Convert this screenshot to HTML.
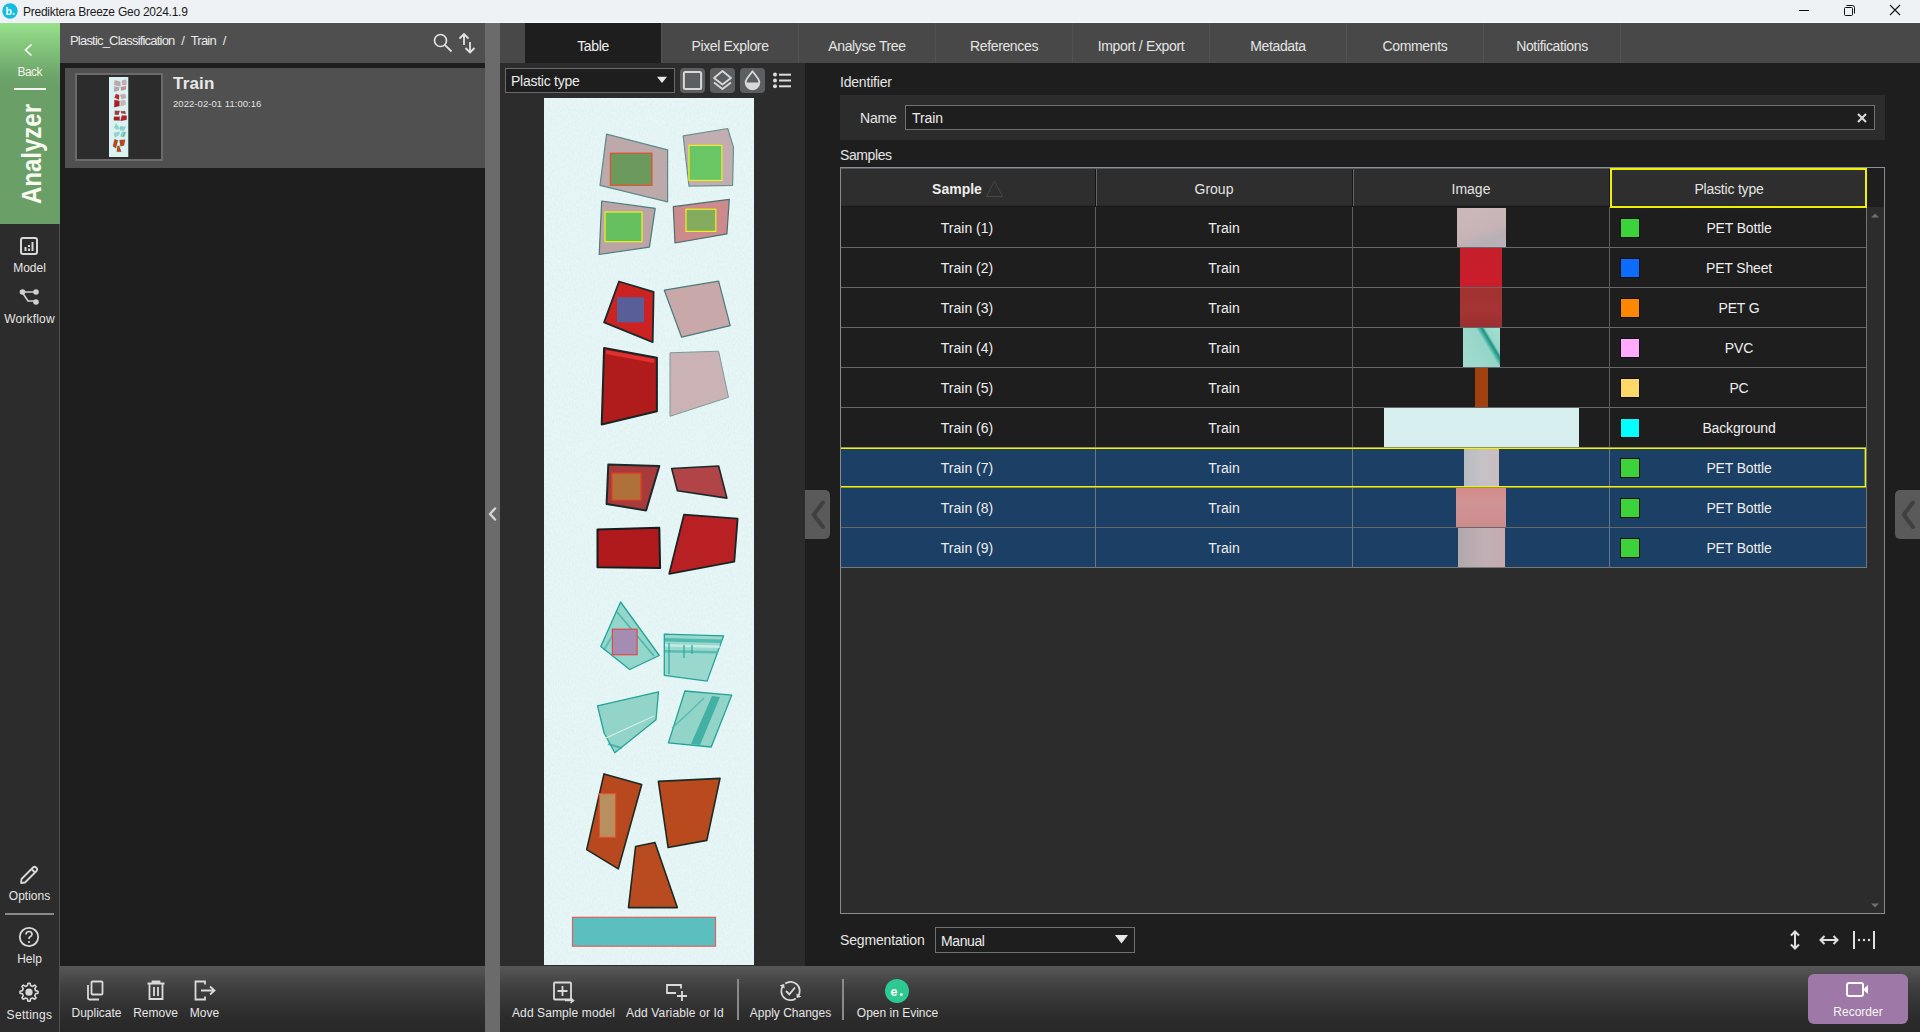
<!DOCTYPE html>
<html><head><meta charset="utf-8">
<style>
*{box-sizing:border-box;margin:0;padding:0}
html,body{width:1920px;height:1032px;overflow:hidden;background:#1e1e1e;font-family:"Liberation Sans",sans-serif;color:#e6e6e6}
.a{position:absolute;display:block}
.t{position:absolute;white-space:nowrap;line-height:1}
</style></head><body>

<div class="a" style="left:0px;top:0px;width:1920px;height:22px;background:#eef2f5;"></div>
<div class="a" style="left:0px;top:22px;width:1920px;height:1px;background:#f8fafc;"></div>
<svg class="a" style="left:2px;top:3px;" width="16" height="16" viewBox="0 0 16 16"><circle cx="8" cy="8" r="7.7" fill="#14bde0"/><text x="3.6" y="12" font-family="Liberation Sans" font-weight="700" font-size="10.5" fill="#fff">b</text><circle cx="11.6" cy="11" r="1" fill="#fff"/></svg>
<div class="t" style="left:23px;top:5.84px;font-size:12px;color:#1a1a1a;font-weight:400;letter-spacing:-0.25px;">Prediktera Breeze Geo 2024.1.9</div>
<div class="a" style="left:1799px;top:10px;width:10px;height:1px;background:#111;"></div>
<svg class="a" style="left:1843px;top:4px;" width="13" height="13" viewBox="0 0 13 13"><rect x="1.5" y="3.5" width="8" height="8" rx="1" fill="none" stroke="#111" stroke-width="1"/><path d="M3.5 1.5 H9.5 Q11.5 1.5 11.5 3.5 V9.5" fill="none" stroke="#111" stroke-width="1"/></svg>
<svg class="a" style="left:1889px;top:4px;" width="12" height="12" viewBox="0 0 12 12"><path d="M1 1 L11 11 M11 1 L1 11" stroke="#111" stroke-width="1.1"/></svg>
<div class="a" style="left:0px;top:23px;width:60px;height:1009px;background:#2c2c2c;"></div>
<div class="a" style="left:59px;top:23px;width:1px;height:1009px;background:#505050;"></div>
<div class="a" style="left:0px;top:23px;width:60px;height:201px;background:linear-gradient(#98e28c 0px,#86c97e 20px,#6ea56b 52px,#6aa068 66px,#6aa068 201px);"></div>
<svg class="a" style="left:23px;top:43px;" width="12" height="14" viewBox="0 0 12 14"><path d="M8.5 1.5 L2.5 7 L8.5 12.5" fill="none" stroke="#fff" stroke-width="1.6"/></svg>
<div class="t" style="left:17.5px;top:65.84px;font-size:12px;color:#f4f4e8;font-weight:400;letter-spacing:-0.6px;">Back</div>
<div class="a" style="left:14px;top:88px;width:32px;height:2px;background:#f2f2f2;"></div>
<div class="t" style="left:31.5px;top:154.3px;font-size:27px;font-weight:700;color:#fafaf0;transform:translate(-50%,-50%) rotate(-90deg) scaleX(0.89);transform-origin:50% 50%;line-height:1">Analyzer</div>
<svg class="a" style="left:19px;top:236px;" width="20" height="20" viewBox="0 0 20 20"><rect x="2" y="2" width="16" height="16" rx="2" fill="none" stroke="#d8d8d8" stroke-width="2"/><rect x="5.5" y="11" width="2" height="4" fill="#d8d8d8"/><rect x="9" y="9" width="2" height="2" fill="#d8d8d8"/><rect x="9" y="12.5" width="2" height="2.5" fill="#d8d8d8"/><rect x="12.5" y="6" width="2" height="9" fill="#d8d8d8"/></svg>
<div class="t" style="left:-270.5px;width:600px;text-align:center;top:261.84px;font-size:12px;color:#e6e6e6;font-weight:400;letter-spacing:0px;">Model</div>
<svg class="a" style="left:18px;top:286px;" width="24" height="20" viewBox="0 0 24 20"><path d="M4 6 H18 M4 6 L10 15 H18" fill="none" stroke="#d0d0d0" stroke-width="1.6"/><circle cx="4.5" cy="6" r="2.8" fill="#d0d0d0"/><circle cx="18" cy="6" r="2.8" fill="#d0d0d0"/><circle cx="18" cy="16" r="2.8" fill="#d0d0d0"/></svg>
<div class="t" style="left:-270.5px;width:600px;text-align:center;top:312.84px;font-size:12px;color:#e6e6e6;font-weight:400;letter-spacing:0.2px;">Workflow</div>
<svg class="a" style="left:18px;top:864px;" width="22" height="22" viewBox="0 0 22 22"><path d="M3 19 L3.5 15 L15 3.5 Q16.5 2 18 3.5 L18.5 4 Q20 5.5 18.5 7 L7 18.5 Z" fill="none" stroke="#d8d8d8" stroke-width="1.8" stroke-linejoin="round"/><path d="M13.5 5 L17 8.5" stroke="#d8d8d8" stroke-width="1.8"/></svg>
<div class="t" style="left:-270.5px;width:600px;text-align:center;top:889.84px;font-size:12px;color:#e6e6e6;font-weight:400;letter-spacing:0px;">Options</div>
<div class="a" style="left:5px;top:913px;width:49px;height:2px;background:#8a8a8a;"></div>
<svg class="a" style="left:18px;top:926px;" width="22" height="22" viewBox="0 0 22 22"><circle cx="11" cy="11" r="9.2" fill="none" stroke="#d8d8d8" stroke-width="1.8"/><path d="M8 8.5 Q8 5.5 11 5.5 Q14 5.5 14 8.3 Q14 10 11.8 11 Q11 11.5 11 13" fill="none" stroke="#d8d8d8" stroke-width="1.7"/><circle cx="11" cy="16" r="1.1" fill="#d8d8d8"/></svg>
<div class="t" style="left:-270.5px;width:600px;text-align:center;top:952.84px;font-size:12px;color:#e6e6e6;font-weight:400;letter-spacing:0px;">Help</div>
<svg class="a" style="left:18px;top:982px;" width="22" height="22" viewBox="0 0 22 22"><path d="M10 1.2 L12 1.2 L12.6 3.6 L14.6 4.4 L16.7 3.1 L18.1 4.5 L16.8 6.6 L17.6 8.6 L20 9.2 L20 11.2 L17.6 11.8 L16.8 13.8 L18.1 15.9 L16.7 17.3 L14.6 16 L12.6 16.8 L12 19.2 L10 19.2 L9.4 16.8 L7.4 16 L5.3 17.3 L3.9 15.9 L5.2 13.8 L4.4 11.8 L2 11.2 L2 9.2 L4.4 8.6 L5.2 6.6 L3.9 4.5 L5.3 3.1 L7.4 4.4 L9.4 3.6 Z" fill="none" stroke="#d8d8d8" stroke-width="1.6" stroke-linejoin="round"/><circle cx="11" cy="10.2" r="3.6" fill="#d8d8d8"/></svg>
<div class="t" style="left:-270.5px;width:600px;text-align:center;top:1008.84px;font-size:12px;color:#e6e6e6;font-weight:400;letter-spacing:0.3px;">Settings</div>
<div class="a" style="left:60px;top:23px;width:425px;height:40px;background:#4f4f4f;"></div>
<div class="a" style="left:60px;top:63px;width:425px;height:903px;background:#1e1e1e;"></div>
<div class="t" style="left:70px;top:34.00px;font-size:13px;color:#e8e8e8;font-weight:400;letter-spacing:-0.8px;word-spacing:4px">Plastic_Classification / Train /</div>
<svg class="a" style="left:432px;top:32px;" width="22" height="22" viewBox="0 0 22 22"><circle cx="8.5" cy="8.5" r="6" fill="none" stroke="#e2e2e2" stroke-width="1.7"/><path d="M12.8 12.8 L19.5 19.5" stroke="#e2e2e2" stroke-width="1.8"/></svg>
<svg class="a" style="left:456px;top:31px;" width="24" height="24" viewBox="0 0 24 24"><path d="M8 14 V3 M3.5 7.5 L8 3 L12.5 7.5" fill="none" stroke="#e2e2e2" stroke-width="1.8"/><path d="M14 11 V21.5 M9.5 17 L14 21.5 L18.5 17" fill="none" stroke="#e2e2e2" stroke-width="1.8"/></svg>
<div class="a" style="left:65px;top:68px;width:420px;height:100px;background:#505050;"></div>
<div class="a" style="left:75px;top:73px;width:88px;height:88px;background:#2c2c2c;border:2px solid #6a6a6a"></div>
<div class="t" style="left:173px;top:74.61px;font-size:17px;color:#e8e8e8;font-weight:700;letter-spacing:0.2px;">Train</div>
<div class="t" style="left:173px;top:98.96px;font-size:9.5px;color:#e0e0e0;font-weight:400;letter-spacing:0.05px;">2022-02-01 11:00:16</div>
<div class="a" style="left:60px;top:966px;width:425px;height:66px;background:linear-gradient(#575757 0px,#3e3e3e 22px,#2c2c2c 50px,#282828 66px);"></div>
<svg class="a" style="left:84px;top:979px;" width="24" height="24" viewBox="0 0 24 24"><rect x="7.5" y="2.5" width="11" height="13" rx="1" fill="none" stroke="#dadada" stroke-width="1.8"/><path d="M4 6 V19 Q4 20.5 5.5 20.5 H15" fill="none" stroke="#dadada" stroke-width="1.8"/></svg>
<div class="t" style="left:-203.5px;width:600px;text-align:center;top:1006.84px;font-size:12px;color:#e6e6e6;font-weight:400;letter-spacing:0px;">Duplicate</div>
<svg class="a" style="left:144px;top:979px;" width="24" height="24" viewBox="0 0 24 24"><path d="M3.5 4.5 H20.5 M8.5 4.5 V2.5 H15.5 V4.5" fill="none" stroke="#dadada" stroke-width="1.8"/><path d="M5.5 5 V20 H18.5 V5" fill="none" stroke="#dadada" stroke-width="1.8"/><path d="M10 8 V17 M14 8 V17" stroke="#dadada" stroke-width="1.8"/></svg>
<div class="t" style="left:-144.5px;width:600px;text-align:center;top:1006.84px;font-size:12px;color:#e6e6e6;font-weight:400;letter-spacing:0px;">Remove</div>
<svg class="a" style="left:192px;top:979px;" width="26" height="24" viewBox="0 0 26 24"><path d="M13 5.5 V2.5 H3.5 V20.5 H13 V17.5" fill="none" stroke="#dadada" stroke-width="1.8"/><path d="M9 11.5 H22 M18 7.5 L22.5 11.5 L18 15.5" fill="none" stroke="#dadada" stroke-width="1.8"/></svg>
<div class="t" style="left:-95.5px;width:600px;text-align:center;top:1006.84px;font-size:12px;color:#e6e6e6;font-weight:400;letter-spacing:0px;">Move</div>
<div class="a" style="left:485px;top:23px;width:15px;height:1009px;background:#6b6b6b;"></div>
<svg class="a" style="left:487px;top:506px;" width="11" height="16" viewBox="0 0 11 16"><path d="M8 2.5 L3 8 L8 13.5" fill="none" stroke="#d6d6d6" stroke-width="2.4" stroke-linecap="round" stroke-linejoin="round"/></svg>
<div class="a" style="left:500px;top:23px;width:1420px;height:40px;background:#484848;"></div>
<div class="a" style="left:525px;top:23px;width:136px;height:40px;background:#1e1e1e;"></div>
<div class="t" style="left:293px;width:600px;text-align:center;top:39.15px;font-size:14px;color:#f0f0f0;font-weight:400;letter-spacing:-0.35px;">Table</div>
<div class="a" style="left:661px;top:23px;width:1px;height:40px;background:#525252;"></div>
<div class="t" style="left:430px;width:600px;text-align:center;top:39.15px;font-size:14px;color:#e4e4e4;font-weight:400;letter-spacing:-0.35px;">Pixel Explore</div>
<div class="a" style="left:798px;top:23px;width:1px;height:40px;background:#525252;"></div>
<div class="t" style="left:567px;width:600px;text-align:center;top:39.15px;font-size:14px;color:#e4e4e4;font-weight:400;letter-spacing:-0.35px;">Analyse Tree</div>
<div class="a" style="left:935px;top:23px;width:1px;height:40px;background:#525252;"></div>
<div class="t" style="left:704px;width:600px;text-align:center;top:39.15px;font-size:14px;color:#e4e4e4;font-weight:400;letter-spacing:-0.35px;">References</div>
<div class="a" style="left:1072px;top:23px;width:1px;height:40px;background:#525252;"></div>
<div class="t" style="left:841px;width:600px;text-align:center;top:39.15px;font-size:14px;color:#e4e4e4;font-weight:400;letter-spacing:-0.35px;">Import / Export</div>
<div class="a" style="left:1209px;top:23px;width:1px;height:40px;background:#525252;"></div>
<div class="t" style="left:978px;width:600px;text-align:center;top:39.15px;font-size:14px;color:#e4e4e4;font-weight:400;letter-spacing:-0.35px;">Metadata</div>
<div class="a" style="left:1346px;top:23px;width:1px;height:40px;background:#525252;"></div>
<div class="t" style="left:1115px;width:600px;text-align:center;top:39.15px;font-size:14px;color:#e4e4e4;font-weight:400;letter-spacing:-0.35px;">Comments</div>
<div class="a" style="left:1483px;top:23px;width:1px;height:40px;background:#525252;"></div>
<div class="t" style="left:1252px;width:600px;text-align:center;top:39.15px;font-size:14px;color:#e4e4e4;font-weight:400;letter-spacing:-0.35px;">Notifications</div>
<div class="a" style="left:1620px;top:23px;width:1px;height:40px;background:#525252;"></div>
<div class="a" style="left:500px;top:63px;width:305px;height:903px;background:#2c2c2c;"></div>
<svg class="a" style="left:544px;top:98px;" width="210" height="867" viewBox="0 0 210 867"><defs><filter id="nf" x="0" y="0" width="100%" height="100%"><feTurbulence type="fractalNoise" baseFrequency="0.7 0.35" numOctaves="2" seed="3"/><feColorMatrix values="0 0 0 0 1  0 0 0 0 1  0 0 0 0 1  0 0 0 -1.2 1.1"/></filter><pattern id="noise" width="210" height="867" patternUnits="userSpaceOnUse"><rect width="210" height="867" filter="url(#nf)"/></pattern></defs><rect x="0" y="0" width="210" height="867" fill="#dcf1f1"/><rect x="0" y="0" width="210" height="867" fill="url(#noise)" opacity="0.5"/><polygon points="62.6,36.2 123.6,51.9 123.6,103.8 56.0,87.3" fill="#bda9aa" stroke="#5c8a8a" stroke-width="1.2" opacity="1" stroke-linejoin="round"/><rect x="66.4" y="55.2" width="41.5" height="32.1" fill="#6c9a5c" stroke="#e05030" stroke-width="1.2" fill-opacity="1"/><polygon points="139.2,37.9 183.7,30.5 189.5,49.4 188.6,87.3 145.0,88.1" fill="#c2aeb0" stroke="#6a9090" stroke-width="1.2" opacity="1" stroke-linejoin="round"/><rect x="145.0" y="47.4" width="32.9" height="35.0" fill="#68c664" stroke="#f0f020" stroke-width="1.2" fill-opacity="1"/><polygon points="57.7,103.0 111.2,110.4 105.4,149.1 55.2,156.5" fill="#bba4a6" stroke="#4a7a7a" stroke-width="1.2" opacity="1" stroke-linejoin="round"/><rect x="61.0" y="114.0" width="37.0" height="29.7" fill="#66c060" stroke="#f0f020" stroke-width="1.2" fill-opacity="1"/><polygon points="129.3,108.7 185.3,101.3 182.9,135.9 131.0,145.0" fill="#cc8a8c" stroke="#4a7070" stroke-width="1.2" opacity="1" stroke-linejoin="round"/><rect x="142.0" y="111.2" width="29.8" height="22.2" fill="#84ac5e" stroke="#f0f020" stroke-width="1.2" fill-opacity="1"/><polygon points="75.0,183.5 109.6,193.9 108.7,244.1 60.1,224.4" fill="#cc2222" stroke="#1c2a2a" stroke-width="1.8" opacity="1" stroke-linejoin="round"/><rect x="73.0" y="199.2" width="27.0" height="25.2" fill="#5a5e98" stroke="none" stroke-width="0" fill-opacity="1"/><polygon points="120.3,192.2 174.6,183.2 186.2,227.7 137.6,239.2" fill="#c9a8aa" stroke="#4a7a7a" stroke-width="1.2" opacity="1" stroke-linejoin="round"/><polygon points="60.1,249.9 112.9,259.8 112.9,313.3 57.7,326.5" fill="#b01c1c" stroke="#1a2424" stroke-width="2" opacity="1" stroke-linejoin="round"/><polygon points="62.0,252.0 110.0,261.0 110.0,265.0 62.0,256.0" fill="#e03030" stroke="none" stroke-width="0" opacity="1" stroke-linejoin="round"/><polygon points="126.0,254.8 174.6,253.2 184.5,299.3 126.0,318.3" fill="#cbb2b4" stroke="#7a9a9a" stroke-width="1" opacity="1" stroke-linejoin="round"/><polygon points="64.3,366.4 115.3,368.0 102.1,412.5 62.6,405.9" fill="#a83a3c" stroke="#1a2a2a" stroke-width="2" opacity="1" stroke-linejoin="round"/><rect x="68.0" y="375.1" width="28.9" height="27.0" fill="#b0703a" stroke="#e04020" stroke-width="1.2" fill-opacity="1"/><polygon points="127.7,370.5 174.6,368.0 182.9,400.1 133.4,392.7" fill="#b04446" stroke="#1a2a2a" stroke-width="1.6" opacity="1" stroke-linejoin="round"/><polygon points="53.5,431.4 115.3,429.8 116.1,470.1 53.5,469.3" fill="#b01a1c" stroke="#141e1e" stroke-width="2" opacity="1" stroke-linejoin="round"/><polygon points="140.0,416.6 193.6,420.7 190.3,463.6 125.2,475.9" fill="#b82024" stroke="#1a2424" stroke-width="1.8" opacity="1" stroke-linejoin="round"/><polygon points="76.6,504.0 115.3,557.5 85.7,571.5 56.8,548.5" fill="#92d6cc" stroke="#22a39a" stroke-width="1.3" opacity="1" stroke-linejoin="round"/><path d="M73 514 L110 558" stroke="#40b0a6" stroke-width="1.6" opacity="0.8"/><path d="M60 552 L70 535" stroke="#40b0a6" stroke-width="2" opacity="0.6"/><rect x="68.4" y="531.2" width="24.7" height="25.5" fill="#a48cb2" stroke="#e04848" stroke-width="1.2" fill-opacity="1"/><polygon points="120.3,536.1 179.6,537.8 163.1,583.1 120.3,577.3" fill="#9ad8ce" stroke="#22a39a" stroke-width="1.3" opacity="1" stroke-linejoin="round"/><polygon points="120.8,540.0 178.5,541.5 177.0,545.0 121.0,543.5" fill="#40b4aa" stroke="none" stroke-width="0" opacity="0.8" stroke-linejoin="round"/><polygon points="121.0,546.0 176.0,547.5 175.5,550.0 121.0,548.5" fill="#c8eee8" stroke="none" stroke-width="0" opacity="0.9" stroke-linejoin="round"/><polygon points="121.0,552.0 174.0,553.0 173.5,555.5 121.0,554.5" fill="#40b4aa" stroke="none" stroke-width="0" opacity="0.7" stroke-linejoin="round"/><path d="M125 545 V576 M140 547 V560 M148 547 V556" stroke="#30aaa0" stroke-width="1.6" opacity="0.8"/><polygon points="53.5,607.8 114.5,593.8 112.0,621.8 70.8,654.7 60.1,635.0" fill="#92d4c8" stroke="#22a39a" stroke-width="1.3" opacity="1" stroke-linejoin="round"/><path d="M62 640 L110 618" stroke="#e6f6f2" stroke-width="1.2" opacity="0.8"/><path d="M64 646 L78 650" stroke="#30a89e" stroke-width="2" opacity="0.7"/><polygon points="140.9,593.0 187.8,597.1 167.2,649.0 124.4,644.9" fill="#92d4c8" stroke="#22a39a" stroke-width="1.3" opacity="1" stroke-linejoin="round"/><polygon points="168.0,598.0 176.0,599.0 156.0,647.0 147.0,646.0" fill="#2ea69c" stroke="none" stroke-width="0" opacity="0.8" stroke-linejoin="round"/><path d="M128 630 Q145 615 160 600" stroke="#40b0a6" stroke-width="1.4" fill="none" opacity="0.7"/><polygon points="60.0,675.9 97.7,686.5 74.3,770.9 42.7,751.6" fill="#b8491e" stroke="#1c2a24" stroke-width="1.6" opacity="1" stroke-linejoin="round"/><rect x="55.4" y="695.6" width="16.2" height="43.8" fill="#b89060" stroke="#e05030" stroke-width="1.2" fill-opacity="1"/><polygon points="114.4,683.4 176.0,680.4 162.8,742.4 124.1,749.5" fill="#b84a1e" stroke="#1c2a24" stroke-width="1.6" opacity="1" stroke-linejoin="round"/><polygon points="91.6,748.5 110.9,744.5 133.3,809.6 84.5,809.6" fill="#b84c20" stroke="#1c2a24" stroke-width="1.6" opacity="1" stroke-linejoin="round"/><rect x="28.5" y="819.3" width="143.0" height="28.9" fill="#5cbfbf" stroke="#e06060" stroke-width="1.2" fill-opacity="1"/></svg>
<svg class="a" style="left:109px;top:77px;overflow:hidden" width="20" height="80" viewBox="0 0 20 80"><g transform="scale(0.091905,0.092272)"><rect x="0" y="0" width="210" height="867" fill="#dcf1f1"/><rect x="0" y="0" width="210" height="867" fill="none" opacity="0.5"/><polygon points="62.6,36.2 123.6,51.9 123.6,103.8 56.0,87.3" fill="#bda9aa" stroke="#5c8a8a" stroke-width="1.2" opacity="1" stroke-linejoin="round"/><polygon points="139.2,37.9 183.7,30.5 189.5,49.4 188.6,87.3 145.0,88.1" fill="#c2aeb0" stroke="#6a9090" stroke-width="1.2" opacity="1" stroke-linejoin="round"/><polygon points="57.7,103.0 111.2,110.4 105.4,149.1 55.2,156.5" fill="#bba4a6" stroke="#4a7a7a" stroke-width="1.2" opacity="1" stroke-linejoin="round"/><polygon points="129.3,108.7 185.3,101.3 182.9,135.9 131.0,145.0" fill="#cc8a8c" stroke="#4a7070" stroke-width="1.2" opacity="1" stroke-linejoin="round"/><polygon points="75.0,183.5 109.6,193.9 108.7,244.1 60.1,224.4" fill="#cc2222" stroke="#1c2a2a" stroke-width="1.8" opacity="1" stroke-linejoin="round"/><polygon points="120.3,192.2 174.6,183.2 186.2,227.7 137.6,239.2" fill="#c9a8aa" stroke="#4a7a7a" stroke-width="1.2" opacity="1" stroke-linejoin="round"/><polygon points="60.1,249.9 112.9,259.8 112.9,313.3 57.7,326.5" fill="#b01c1c" stroke="#1a2424" stroke-width="2" opacity="1" stroke-linejoin="round"/><polygon points="62.0,252.0 110.0,261.0 110.0,265.0 62.0,256.0" fill="#e03030" stroke="none" stroke-width="0" opacity="1" stroke-linejoin="round"/><polygon points="126.0,254.8 174.6,253.2 184.5,299.3 126.0,318.3" fill="#cbb2b4" stroke="#7a9a9a" stroke-width="1" opacity="1" stroke-linejoin="round"/><polygon points="64.3,366.4 115.3,368.0 102.1,412.5 62.6,405.9" fill="#a83a3c" stroke="#1a2a2a" stroke-width="2" opacity="1" stroke-linejoin="round"/><polygon points="127.7,370.5 174.6,368.0 182.9,400.1 133.4,392.7" fill="#b04446" stroke="#1a2a2a" stroke-width="1.6" opacity="1" stroke-linejoin="round"/><polygon points="53.5,431.4 115.3,429.8 116.1,470.1 53.5,469.3" fill="#b01a1c" stroke="#141e1e" stroke-width="2" opacity="1" stroke-linejoin="round"/><polygon points="140.0,416.6 193.6,420.7 190.3,463.6 125.2,475.9" fill="#b82024" stroke="#1a2424" stroke-width="1.8" opacity="1" stroke-linejoin="round"/><polygon points="76.6,504.0 115.3,557.5 85.7,571.5 56.8,548.5" fill="#92d6cc" stroke="#22a39a" stroke-width="1.3" opacity="1" stroke-linejoin="round"/><path d="M73 514 L110 558" stroke="#40b0a6" stroke-width="1.6" opacity="0.8"/><path d="M60 552 L70 535" stroke="#40b0a6" stroke-width="2" opacity="0.6"/><polygon points="120.3,536.1 179.6,537.8 163.1,583.1 120.3,577.3" fill="#9ad8ce" stroke="#22a39a" stroke-width="1.3" opacity="1" stroke-linejoin="round"/><polygon points="120.8,540.0 178.5,541.5 177.0,545.0 121.0,543.5" fill="#40b4aa" stroke="none" stroke-width="0" opacity="0.8" stroke-linejoin="round"/><polygon points="121.0,546.0 176.0,547.5 175.5,550.0 121.0,548.5" fill="#c8eee8" stroke="none" stroke-width="0" opacity="0.9" stroke-linejoin="round"/><polygon points="121.0,552.0 174.0,553.0 173.5,555.5 121.0,554.5" fill="#40b4aa" stroke="none" stroke-width="0" opacity="0.7" stroke-linejoin="round"/><path d="M125 545 V576 M140 547 V560 M148 547 V556" stroke="#30aaa0" stroke-width="1.6" opacity="0.8"/><polygon points="53.5,607.8 114.5,593.8 112.0,621.8 70.8,654.7 60.1,635.0" fill="#92d4c8" stroke="#22a39a" stroke-width="1.3" opacity="1" stroke-linejoin="round"/><path d="M62 640 L110 618" stroke="#e6f6f2" stroke-width="1.2" opacity="0.8"/><path d="M64 646 L78 650" stroke="#30a89e" stroke-width="2" opacity="0.7"/><polygon points="140.9,593.0 187.8,597.1 167.2,649.0 124.4,644.9" fill="#92d4c8" stroke="#22a39a" stroke-width="1.3" opacity="1" stroke-linejoin="round"/><polygon points="168.0,598.0 176.0,599.0 156.0,647.0 147.0,646.0" fill="#2ea69c" stroke="none" stroke-width="0" opacity="0.8" stroke-linejoin="round"/><path d="M128 630 Q145 615 160 600" stroke="#40b0a6" stroke-width="1.4" fill="none" opacity="0.7"/><polygon points="60.0,675.9 97.7,686.5 74.3,770.9 42.7,751.6" fill="#b8491e" stroke="#1c2a24" stroke-width="1.6" opacity="1" stroke-linejoin="round"/><polygon points="114.4,683.4 176.0,680.4 162.8,742.4 124.1,749.5" fill="#b84a1e" stroke="#1c2a24" stroke-width="1.6" opacity="1" stroke-linejoin="round"/><polygon points="91.6,748.5 110.9,744.5 133.3,809.6 84.5,809.6" fill="#b84c20" stroke="#1c2a24" stroke-width="1.6" opacity="1" stroke-linejoin="round"/></g></svg>
<div class="a" style="left:505px;top:68px;width:170px;height:25px;background:#1e1e1e;border:1px solid #6a6a6a"></div>
<div class="t" style="left:511px;top:74.15px;font-size:14px;color:#ececec;font-weight:400;letter-spacing:-0.25px;">Plastic type</div>
<svg class="a" style="left:655px;top:75px;" width="14" height="12" viewBox="0 0 14 12"><path d="M2 1.8 H12 L7 8 Z" fill="#e8e8e8"/></svg>
<div class="a" style="left:680px;top:68px;width:25px;height:25px;background:#5c5f62;border-radius:4px"></div>
<svg class="a" style="left:680px;top:68px;" width="25" height="25" viewBox="0 0 25 25"><rect x="3.9" y="3.9" width="17.2" height="17.2" rx="1.5" fill="none" stroke="#d8d8d8" stroke-width="2"/></svg>
<div class="a" style="left:710px;top:68px;width:25px;height:25px;background:#5c5f62;border-radius:4px"></div>
<svg class="a" style="left:710px;top:68px;" width="25" height="25" viewBox="0 0 25 25"><path d="M12.5 3 L21 10 L12.5 16.5 L4 10 Z" fill="none" stroke="#d8d8d8" stroke-width="1.8" stroke-linejoin="round"/><path d="M4 14.5 L12.5 21 L21 14.5" fill="none" stroke="#d8d8d8" stroke-width="1.8" stroke-linejoin="round"/></svg>
<div class="a" style="left:740px;top:68px;width:25px;height:25px;background:#5c5f62;border-radius:4px"></div>
<svg class="a" style="left:740px;top:68px;" width="25" height="25" viewBox="0 0 25 25"><path d="M12.5 3.2 L17.99 10.48 A6.8 6.8 0 1 1 7.01 10.48 Z" fill="none" stroke="#d8d8d8" stroke-width="1.8" stroke-linejoin="round"/><path d="M5.7 14.5 A6.8 6.8 0 0 0 19.3 14.5 Z" fill="#d8d8d8"/></svg>
<svg class="a" style="left:772px;top:70px;" width="22" height="20" viewBox="0 0 22 20"><circle cx="3" cy="4.5" r="2" fill="#dcdcdc"/><circle cx="3" cy="10.4" r="2" fill="#dcdcdc"/><circle cx="3" cy="16.3" r="2" fill="#dcdcdc"/><rect x="7" y="3.7" width="12" height="2" fill="#dcdcdc"/><rect x="7" y="9.5" width="12" height="2" fill="#dcdcdc"/><rect x="7" y="15.3" width="12" height="2" fill="#dcdcdc"/></svg>
<div class="a" style="left:805px;top:63px;width:1115px;height:903px;background:#1e1e1e;"></div>
<div class="a" style="left:805px;top:490px;width:25px;height:49px;background:#5a5a5a;border-radius:0 5px 5px 0"></div>
<svg class="a" style="left:805px;top:490px;" width="25" height="49" viewBox="0 0 25 49"><path d="M18 12.5 L8.7 24.7 L18 37" fill="none" stroke="#404040" stroke-width="4" stroke-linecap="round" stroke-linejoin="round"/></svg>
<div class="a" style="left:1895px;top:490px;width:25px;height:49px;background:#5a5a5a;border-radius:5px 0 0 5px"></div>
<svg class="a" style="left:1895px;top:490px;" width="25" height="49" viewBox="0 0 25 49"><path d="M18 12.5 L8.7 24.7 L18 37" fill="none" stroke="#404040" stroke-width="4" stroke-linecap="round" stroke-linejoin="round"/></svg>
<div class="t" style="left:840px;top:75.15px;font-size:14px;color:#e6e6e6;font-weight:400;letter-spacing:-0.2px;">Identifier</div>
<div class="a" style="left:840px;top:95px;width:1045px;height:45px;background:#2c2c2c;"></div>
<div class="t" style="left:860px;top:111.15px;font-size:14px;color:#e6e6e6;font-weight:400;letter-spacing:-0.2px;">Name</div>
<div class="a" style="left:905px;top:105px;width:970px;height:25px;background:#1e1e1e;border:1px solid #707070"></div>
<div class="t" style="left:912px;top:111.15px;font-size:14px;color:#ececec;font-weight:400;letter-spacing:-0.1px;">Train</div>
<svg class="a" style="left:1856px;top:112px;" width="12" height="12" viewBox="0 0 12 12"><path d="M2 2 L10 10 M10 2 L2 10" stroke="#dcdcdc" stroke-width="2"/></svg>
<div class="t" style="left:840px;top:147.65px;font-size:14px;color:#e6e6e6;font-weight:400;letter-spacing:-0.4px;">Samples</div>
<div class="a" style="left:840px;top:167px;width:1045px;height:747px;background:#2c2c2c;border:1px solid #8a8a8a"></div>
<div class="a" style="left:841px;top:168px;width:1025px;height:39px;background:#2e2e2e;"></div>
<div class="a" style="left:841px;top:205px;width:1025px;height:1px;background:#282828;"></div>
<div class="a" style="left:841px;top:206px;width:1025px;height:1px;background:#1a1a1a;"></div>
<div class="a" style="left:1095px;top:168px;width:1px;height:39px;background:#141414;"></div>
<div class="a" style="left:1096px;top:169px;width:1px;height:37px;background:#666666;"></div>
<div class="a" style="left:1352px;top:168px;width:1px;height:39px;background:#141414;"></div>
<div class="a" style="left:1353px;top:169px;width:1px;height:37px;background:#666666;"></div>
<div class="a" style="left:1609px;top:168px;width:1px;height:39px;background:#141414;"></div>
<div class="a" style="left:1610px;top:169px;width:1px;height:37px;background:#666666;"></div>
<div class="a" style="left:841px;top:167px;width:1043px;height:1px;background:#8a9098;"></div>
<div class="a" style="left:841px;top:168px;width:1025px;height:1px;background:#5a5a5a;"></div>
<div class="a" style="left:1866px;top:168px;width:18px;height:39px;background:#1e1e1e;"></div>
<div class="t" style="left:657px;width:600px;text-align:center;top:182.15px;font-size:14px;color:#eeeeee;font-weight:700;letter-spacing:0px;">Sample</div>
<svg class="a" style="left:985px;top:179px;" width="20" height="19" viewBox="0 0 20 19"><path d="M1.5 17.5 L9.5 2 L17.5 17.5 Z" fill="none" stroke="#474747" stroke-width="1"/></svg>
<div class="t" style="left:914px;width:600px;text-align:center;top:182.15px;font-size:14px;color:#e4e4e4;font-weight:400;letter-spacing:0px;">Group</div>
<div class="t" style="left:1171px;width:600px;text-align:center;top:182.15px;font-size:14px;color:#e4e4e4;font-weight:400;letter-spacing:0px;">Image</div>
<div class="t" style="left:1429px;width:600px;text-align:center;top:182.15px;font-size:14px;color:#e4e4e4;font-weight:400;letter-spacing:-0.2px;">Plastic type</div>
<div class="a" style="left:1610px;top:168px;width:257px;height:40px;background:transparent;border:2px solid #f0f000"></div>
<div class="a" style="left:1866px;top:207px;width:18px;height:706px;background:#2c2c2c;"></div>
<svg class="a" style="left:1869px;top:211px;" width="12" height="8" viewBox="0 0 12 8"><path d="M2 6.5 L6 2.5 L10 6.5 Z" fill="#6e6e6e"/></svg>
<svg class="a" style="left:1869px;top:902px;" width="12" height="8" viewBox="0 0 12 8"><path d="M2 1.5 L6 5.5 L10 1.5 Z" fill="#6e6e6e"/></svg>
<div class="a" style="left:841px;top:207px;width:1025px;height:40px;background:#1e1e1e;"></div>
<div class="a" style="left:841px;top:247px;width:1025px;height:40px;background:#1e1e1e;"></div>
<div class="a" style="left:841px;top:287px;width:1025px;height:40px;background:#1e1e1e;"></div>
<div class="a" style="left:841px;top:327px;width:1025px;height:40px;background:#1e1e1e;"></div>
<div class="a" style="left:841px;top:367px;width:1025px;height:40px;background:#1e1e1e;"></div>
<div class="a" style="left:841px;top:407px;width:1025px;height:40px;background:#1e1e1e;"></div>
<div class="a" style="left:841px;top:447px;width:1025px;height:40px;background:#1c3f66;"></div>
<div class="a" style="left:841px;top:487px;width:1025px;height:40px;background:#1c3f66;"></div>
<div class="a" style="left:841px;top:527px;width:1025px;height:40px;background:#1c3f66;"></div>
<div class="a" style="left:1095px;top:207px;width:1px;height:40px;background:#5e5e5e;"></div>
<div class="a" style="left:1352px;top:207px;width:1px;height:40px;background:#5e5e5e;"></div>
<div class="a" style="left:1609px;top:207px;width:1px;height:40px;background:#5e5e5e;"></div>
<div class="a" style="left:1457px;top:208px;width:49px;height:39px;background:linear-gradient(160deg,#cbb9ba 0%,#c8b4b6 55%,#b4b0b6 80%,#c0b2b4 100%);"></div>
<div class="t" style="left:667px;width:600px;text-align:center;top:221.15px;font-size:14px;color:#eeeeee;font-weight:400;letter-spacing:0px;">Train (1)</div>
<div class="t" style="left:924px;width:600px;text-align:center;top:221.15px;font-size:14px;color:#eeeeee;font-weight:400;letter-spacing:0px;">Train</div>
<div class="a" style="left:1620px;top:218px;width:20px;height:20px;background:#3bd23b;border:1px solid #111"></div>
<div class="t" style="left:1439px;width:600px;text-align:center;top:221.15px;font-size:14px;color:#eeeeee;font-weight:400;letter-spacing:-0.15px;">PET Bottle</div>
<div class="a" style="left:841px;top:247px;width:1025px;height:1px;background:#686868;"></div>
<div class="a" style="left:1095px;top:247px;width:1px;height:40px;background:#5e5e5e;"></div>
<div class="a" style="left:1352px;top:247px;width:1px;height:40px;background:#5e5e5e;"></div>
<div class="a" style="left:1609px;top:247px;width:1px;height:40px;background:#5e5e5e;"></div>
<div class="a" style="left:1460px;top:248px;width:42px;height:39px;background:linear-gradient(#c4202c,#cc1c2a);"></div>
<div class="t" style="left:667px;width:600px;text-align:center;top:261.15px;font-size:14px;color:#eeeeee;font-weight:400;letter-spacing:0px;">Train (2)</div>
<div class="t" style="left:924px;width:600px;text-align:center;top:261.15px;font-size:14px;color:#eeeeee;font-weight:400;letter-spacing:0px;">Train</div>
<div class="a" style="left:1620px;top:258px;width:20px;height:20px;background:#0b6cff;border:1px solid #111"></div>
<div class="t" style="left:1439px;width:600px;text-align:center;top:261.15px;font-size:14px;color:#eeeeee;font-weight:400;letter-spacing:-0.15px;">PET Sheet</div>
<div class="a" style="left:841px;top:287px;width:1025px;height:1px;background:#686868;"></div>
<div class="a" style="left:1095px;top:287px;width:1px;height:40px;background:#5e5e5e;"></div>
<div class="a" style="left:1352px;top:287px;width:1px;height:40px;background:#5e5e5e;"></div>
<div class="a" style="left:1609px;top:287px;width:1px;height:40px;background:#5e5e5e;"></div>
<div class="a" style="left:1460px;top:288px;width:42px;height:39px;background:linear-gradient(#a03232,#a63434 60%,#9a2e30);"></div>
<div class="t" style="left:667px;width:600px;text-align:center;top:301.15px;font-size:14px;color:#eeeeee;font-weight:400;letter-spacing:0px;">Train (3)</div>
<div class="t" style="left:924px;width:600px;text-align:center;top:301.15px;font-size:14px;color:#eeeeee;font-weight:400;letter-spacing:0px;">Train</div>
<div class="a" style="left:1620px;top:298px;width:20px;height:20px;background:#ff8800;border:1px solid #111"></div>
<div class="t" style="left:1439px;width:600px;text-align:center;top:301.15px;font-size:14px;color:#eeeeee;font-weight:400;letter-spacing:-0.15px;">PET G</div>
<div class="a" style="left:841px;top:327px;width:1025px;height:1px;background:#686868;"></div>
<div class="a" style="left:1095px;top:327px;width:1px;height:40px;background:#5e5e5e;"></div>
<div class="a" style="left:1352px;top:327px;width:1px;height:40px;background:#5e5e5e;"></div>
<div class="a" style="left:1609px;top:327px;width:1px;height:40px;background:#5e5e5e;"></div>
<div class="a" style="left:1463px;top:328px;width:37px;height:39px;background:linear-gradient(59deg,#a4dccf 0%,#94d6c8 60%,#30a89a 67%,#1e9080 70%,#94d8ca 75%,#a8e0d4 100%);"></div>
<div class="t" style="left:667px;width:600px;text-align:center;top:341.15px;font-size:14px;color:#eeeeee;font-weight:400;letter-spacing:0px;">Train (4)</div>
<div class="t" style="left:924px;width:600px;text-align:center;top:341.15px;font-size:14px;color:#eeeeee;font-weight:400;letter-spacing:0px;">Train</div>
<div class="a" style="left:1620px;top:338px;width:20px;height:20px;background:#ffaaff;border:1px solid #111"></div>
<div class="t" style="left:1439px;width:600px;text-align:center;top:341.15px;font-size:14px;color:#eeeeee;font-weight:400;letter-spacing:-0.15px;">PVC</div>
<div class="a" style="left:841px;top:367px;width:1025px;height:1px;background:#686868;"></div>
<div class="a" style="left:1095px;top:367px;width:1px;height:40px;background:#5e5e5e;"></div>
<div class="a" style="left:1352px;top:367px;width:1px;height:40px;background:#5e5e5e;"></div>
<div class="a" style="left:1609px;top:367px;width:1px;height:40px;background:#5e5e5e;"></div>
<div class="a" style="left:1475px;top:368px;width:13px;height:39px;background:#a0400e;"></div>
<div class="t" style="left:667px;width:600px;text-align:center;top:381.15px;font-size:14px;color:#eeeeee;font-weight:400;letter-spacing:0px;">Train (5)</div>
<div class="t" style="left:924px;width:600px;text-align:center;top:381.15px;font-size:14px;color:#eeeeee;font-weight:400;letter-spacing:0px;">Train</div>
<div class="a" style="left:1620px;top:378px;width:20px;height:20px;background:#ffd86a;border:1px solid #111"></div>
<div class="t" style="left:1439px;width:600px;text-align:center;top:381.15px;font-size:14px;color:#eeeeee;font-weight:400;letter-spacing:-0.15px;">PC</div>
<div class="a" style="left:841px;top:407px;width:1025px;height:1px;background:#686868;"></div>
<div class="a" style="left:1095px;top:407px;width:1px;height:40px;background:#5e5e5e;"></div>
<div class="a" style="left:1352px;top:407px;width:1px;height:40px;background:#5e5e5e;"></div>
<div class="a" style="left:1609px;top:407px;width:1px;height:40px;background:#5e5e5e;"></div>
<div class="a" style="left:1384px;top:408px;width:195px;height:39px;background:#d6eeee;"></div>
<div class="t" style="left:667px;width:600px;text-align:center;top:421.15px;font-size:14px;color:#eeeeee;font-weight:400;letter-spacing:0px;">Train (6)</div>
<div class="t" style="left:924px;width:600px;text-align:center;top:421.15px;font-size:14px;color:#eeeeee;font-weight:400;letter-spacing:0px;">Train</div>
<div class="a" style="left:1620px;top:418px;width:20px;height:20px;background:#00ffff;border:1px solid #111"></div>
<div class="t" style="left:1439px;width:600px;text-align:center;top:421.15px;font-size:14px;color:#eeeeee;font-weight:400;letter-spacing:-0.15px;">Background</div>
<div class="a" style="left:841px;top:447px;width:1025px;height:1px;background:#686868;"></div>
<div class="a" style="left:1095px;top:447px;width:1px;height:40px;background:#6a7684;"></div>
<div class="a" style="left:1352px;top:447px;width:1px;height:40px;background:#6a7684;"></div>
<div class="a" style="left:1609px;top:447px;width:1px;height:40px;background:#6a7684;"></div>
<div class="a" style="left:1464px;top:448px;width:35px;height:39px;background:linear-gradient(90deg,#b6bcc0,#c4c2c6 50%,#ccbcc0);"></div>
<div class="t" style="left:667px;width:600px;text-align:center;top:461.15px;font-size:14px;color:#eeeeee;font-weight:400;letter-spacing:0px;">Train (7)</div>
<div class="t" style="left:924px;width:600px;text-align:center;top:461.15px;font-size:14px;color:#eeeeee;font-weight:400;letter-spacing:0px;">Train</div>
<div class="a" style="left:1620px;top:458px;width:20px;height:20px;background:#3bd23b;border:1px solid #111"></div>
<div class="t" style="left:1439px;width:600px;text-align:center;top:461.15px;font-size:14px;color:#eeeeee;font-weight:400;letter-spacing:-0.15px;">PET Bottle</div>
<div class="a" style="left:841px;top:487px;width:1025px;height:1px;background:#686868;"></div>
<div class="a" style="left:1095px;top:487px;width:1px;height:40px;background:#6a7684;"></div>
<div class="a" style="left:1352px;top:487px;width:1px;height:40px;background:#6a7684;"></div>
<div class="a" style="left:1609px;top:487px;width:1px;height:40px;background:#6a7684;"></div>
<div class="a" style="left:1456px;top:488px;width:50px;height:39px;background:linear-gradient(#d48a8a,#d09494 40%,#cc8c8e);"></div>
<div class="t" style="left:667px;width:600px;text-align:center;top:501.15px;font-size:14px;color:#eeeeee;font-weight:400;letter-spacing:0px;">Train (8)</div>
<div class="t" style="left:924px;width:600px;text-align:center;top:501.15px;font-size:14px;color:#eeeeee;font-weight:400;letter-spacing:0px;">Train</div>
<div class="a" style="left:1620px;top:498px;width:20px;height:20px;background:#3bd23b;border:1px solid #111"></div>
<div class="t" style="left:1439px;width:600px;text-align:center;top:501.15px;font-size:14px;color:#eeeeee;font-weight:400;letter-spacing:-0.15px;">PET Bottle</div>
<div class="a" style="left:841px;top:527px;width:1025px;height:1px;background:#686868;"></div>
<div class="a" style="left:1095px;top:527px;width:1px;height:40px;background:#6a7684;"></div>
<div class="a" style="left:1352px;top:527px;width:1px;height:40px;background:#6a7684;"></div>
<div class="a" style="left:1609px;top:527px;width:1px;height:40px;background:#6a7684;"></div>
<div class="a" style="left:1458px;top:528px;width:47px;height:39px;background:linear-gradient(90deg,#b0a8ac,#c0b0b4 55%,#c4aab0);"></div>
<div class="t" style="left:667px;width:600px;text-align:center;top:541.15px;font-size:14px;color:#eeeeee;font-weight:400;letter-spacing:0px;">Train (9)</div>
<div class="t" style="left:924px;width:600px;text-align:center;top:541.15px;font-size:14px;color:#eeeeee;font-weight:400;letter-spacing:0px;">Train</div>
<div class="a" style="left:1620px;top:538px;width:20px;height:20px;background:#3bd23b;border:1px solid #111"></div>
<div class="t" style="left:1439px;width:600px;text-align:center;top:541.15px;font-size:14px;color:#eeeeee;font-weight:400;letter-spacing:-0.15px;">PET Bottle</div>
<div class="a" style="left:841px;top:567px;width:1026px;height:1px;background:#777777;"></div>
<div class="a" style="left:1866px;top:207px;width:1px;height:361px;background:#747474;"></div>
<div class="a" style="left:1610px;top:207px;width:257px;height:1px;background:#f0f000;"></div>
<div class="a" style="left:841px;top:448px;width:1025px;height:1px;background:#f4f400;"></div>
<div class="a" style="left:841px;top:447px;width:1025px;height:1px;background:rgba(244,244,0,0.35);"></div>
<div class="a" style="left:841px;top:486px;width:1025px;height:1px;background:#f4f400;"></div>
<div class="a" style="left:841px;top:487px;width:1025px;height:1px;background:rgba(244,244,0,0.35);"></div>
<div class="a" style="left:1865px;top:448px;width:1px;height:39px;background:#f4f400;"></div>
<div class="a" style="left:1864px;top:448px;width:1px;height:39px;background:rgba(244,244,0,0.35);"></div>
<div class="t" style="left:840px;top:933.15px;font-size:14px;color:#e6e6e6;font-weight:400;letter-spacing:-0.15px;">Segmentation</div>
<div class="a" style="left:935px;top:927px;width:200px;height:26px;background:#1e1e1e;border:1px solid #707070"></div>
<div class="t" style="left:941px;top:934.15px;font-size:14px;color:#ececec;font-weight:400;letter-spacing:-0.4px;">Manual</div>
<svg class="a" style="left:1114px;top:934px;" width="15" height="11" viewBox="0 0 15 11"><path d="M1 1 H14 L7.5 9.5 Z" fill="#e8e8e8"/></svg>
<svg class="a" style="left:1786px;top:929px;" width="18" height="22" viewBox="0 0 18 22"><path d="M9 2.5 V19.5 M5 6.5 L9 2.5 L13 6.5 M5 15.5 L9 19.5 L13 15.5" fill="none" stroke="#e0e0e0" stroke-width="2"/></svg>
<svg class="a" style="left:1818px;top:931px;" width="22" height="18" viewBox="0 0 22 18"><path d="M2.5 9 H19.5 M6.5 5 L2.5 9 L6.5 13 M15.5 5 L19.5 9 L15.5 13" fill="none" stroke="#e0e0e0" stroke-width="2"/></svg>
<svg class="a" style="left:1852px;top:929px;" width="24" height="22" viewBox="0 0 24 22"><path d="M2 2 V20 M22 2 V20" stroke="#e0e0e0" stroke-width="2"/><circle cx="7" cy="11" r="1.2" fill="#e0e0e0"/><circle cx="12" cy="11" r="1.2" fill="#e0e0e0"/><circle cx="17" cy="11" r="1.2" fill="#e0e0e0"/></svg>
<div class="a" style="left:500px;top:966px;width:1420px;height:66px;background:linear-gradient(#575757 0px,#3e3e3e 22px,#2c2c2c 50px,#282828 66px);"></div>
<svg class="a" style="left:551px;top:980px;" width="26" height="24" viewBox="0 0 26 24"><rect x="3" y="2.5" width="17" height="17" rx="1" fill="none" stroke="#dadada" stroke-width="1.8"/><path d="M11.5 6 V16 M6.5 11 H16.5" stroke="#dadada" stroke-width="1.8"/><path d="M14 20.5 H22 M19.5 18 L22.5 20.5 L19.5 23" fill="none" stroke="#dadada" stroke-width="1.6"/></svg>
<div class="t" style="left:263.5px;width:600px;text-align:center;top:1006.84px;font-size:12px;color:#e6e6e6;font-weight:400;letter-spacing:0.1px;">Add Sample model</div>
<svg class="a" style="left:664px;top:980px;" width="26" height="24" viewBox="0 0 26 24"><path d="M17 8.5 V5 H3 V13 H12" fill="none" stroke="#dadada" stroke-width="1.8"/><path d="M18 11 V21 M13 16 H23" stroke="#dadada" stroke-width="1.8"/></svg>
<div class="t" style="left:375px;width:600px;text-align:center;top:1006.84px;font-size:12px;color:#e6e6e6;font-weight:400;letter-spacing:0.15px;">Add Variable or Id</div>
<div class="a" style="left:737px;top:979px;width:2px;height:41px;background:#8a8a8a;"></div>
<svg class="a" style="left:777px;top:979px;" width="27" height="25" viewBox="0 0 27 25"><path d="M8.22 4.46 A9.2 9.2 0 0 1 21.04 17.28" fill="none" stroke="#dadada" stroke-width="1.8"/><path d="M18.78 19.54 A9.2 9.2 0 0 1 5.96 6.72" fill="none" stroke="#dadada" stroke-width="1.8"/><path d="M19.80 19.05 L24.32 17.82 L19.40 14.38 Z" fill="#dadada"/><path d="M7.20 4.95 L2.68 6.18 L7.60 9.62 Z" fill="#dadada"/><path d="M9 12 L12.3 15.3 L18 8.5" fill="none" stroke="#dadada" stroke-width="1.8"/></svg>
<div class="t" style="left:490.5px;width:600px;text-align:center;top:1006.84px;font-size:12px;color:#e6e6e6;font-weight:400;letter-spacing:0px;">Apply Changes</div>
<div class="a" style="left:842px;top:979px;width:2px;height:41px;background:#8a8a8a;"></div>
<svg class="a" style="left:885px;top:979px;" width="24" height="24" viewBox="0 0 24 24"><circle cx="12" cy="12" r="12" fill="#2ec892"/><text x="5.5" y="16.5" font-family="Liberation Sans" font-weight="700" font-size="12.5" fill="#fff">e</text><circle cx="16.3" cy="15.6" r="1.4" fill="#fff"/></svg>
<div class="t" style="left:597.5px;width:600px;text-align:center;top:1006.84px;font-size:12px;color:#e6e6e6;font-weight:400;letter-spacing:0px;">Open in Evince</div>
<div class="a" style="left:1808px;top:974px;width:100px;height:50px;background:#9e78a6;border-radius:6px"></div>
<svg class="a" style="left:1845px;top:980px;" width="26" height="20" viewBox="0 0 26 20"><rect x="2" y="3" width="16" height="13" rx="2" fill="none" stroke="#fff" stroke-width="2"/><path d="M18 9.5 L23 5 V14 Z" fill="#fff"/></svg>
<div class="t" style="left:1558px;width:600px;text-align:center;top:1005.84px;font-size:12px;color:#f6f6f6;font-weight:400;letter-spacing:0px;">Recorder</div>
</body></html>
